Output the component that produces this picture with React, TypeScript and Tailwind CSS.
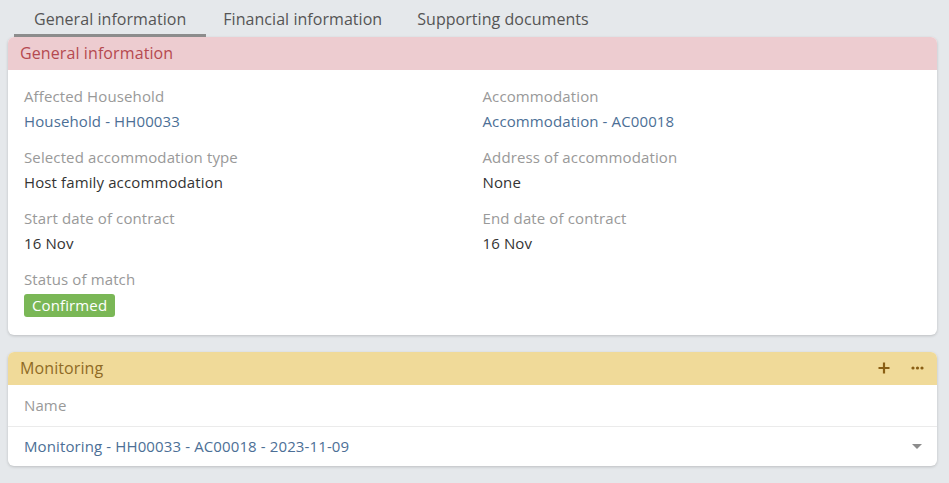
import React from 'react';

const font = { fontFamily: '"Open Sans", "Noto Sans", sans-serif' };

const Field: React.FC<{ label: string; value: React.ReactNode }> = ({ label, value }) => (
  <div className="flex flex-col">
    <div className="text-[15px] leading-[20px] tracking-[0.12px] text-[#999999]">{label}</div>
    <div className="mt-[5px] text-[15px] leading-[20px] tracking-[0.12px]">{value}</div>
  </div>
);

const Link: React.FC<{ children: React.ReactNode }> = ({ children }) => (
  <span className="text-[#4c6f96]">{children}</span>
);

const Plain: React.FC<{ children: React.ReactNode }> = ({ children }) => (
  <span className="text-[#333333]">{children}</span>
);

export default function App() {
  return (
    <div className="w-[949px] h-[483px] bg-[#e5e8eb] overflow-hidden" style={font}>
      {/* Tabs */}
      <div className="flex h-[37px] pl-[14px] text-[16px] tracking-[0.05px] text-[#555555]">
        <div className="flex items-center px-[20px] h-[37px] border-b-[3px] border-[#8c8c8c] pt-[3px]">
          General information
        </div>
        <div className="flex items-center px-[17px] h-[37px]">Financial information</div>
        <div className="flex items-center px-[18px] h-[37px]">Supporting documents</div>
      </div>

      {/* General information card */}
      <div className="mx-[8px] w-[929px] bg-white rounded-[6px] shadow-[0_1px_3px_rgba(0,0,0,0.18)] overflow-hidden">
        <div className="h-[33px] bg-[#edccd0] flex items-center px-[12px] pb-[1px] text-[16px] tracking-[0.1px] text-[#b5494f]">
          General information
        </div>
        <div className="grid grid-cols-2 gap-y-[16px] pl-[16px] pt-[16px] pb-[18px]">
          <Field label="Affected Household" value={<Link>Household - HH00033</Link>} />
          <div className="pl-[2px]">
            <Field label="Accommodation" value={<Link>Accommodation - AC00018</Link>} />
          </div>
          <Field label="Selected accommodation type" value={<Plain>Host family accommodation</Plain>} />
          <div className="pl-[2px]">
            <Field label="Address of accommodation" value={<Plain>None</Plain>} />
          </div>
          <Field label="Start date of contract" value={<Plain>16 Nov</Plain>} />
          <div className="pl-[2px]">
            <Field label="End date of contract" value={<Plain>16 Nov</Plain>} />
          </div>
          <div className="flex flex-col">
            <div className="text-[15px] leading-[20px] tracking-[0.12px] text-[#999999]">Status of match</div>
            <div className="mt-[4px]">
              <span className="inline-flex items-center h-[23px] px-[8px] rounded-[3px] bg-[#7ab756] text-white text-[15px] tracking-[0.12px]">
                Confirmed
              </span>
            </div>
          </div>
        </div>
      </div>

      {/* Monitoring card */}
      <div className="mx-[8px] mt-[17px] w-[929px] bg-white rounded-[6px] shadow-[0_1px_3px_rgba(0,0,0,0.18)] overflow-hidden">
        <div className="h-[33px] bg-[#f0da99] flex items-center justify-between pl-[12px] pr-[12px] pb-[1px] text-[16px] tracking-[0.1px] text-[#8f6a25]">
          <span>Monitoring</span>
          <div className="flex items-center gap-[21px] pr-[1px]">
            <svg width="12" height="12" viewBox="0 0 12 12">
              <path d="M6 0.5v11M0.5 6h11" stroke="#8a5f14" strokeWidth="2.2" />
            </svg>
            <svg width="13" height="4" viewBox="0 0 13 4">
              <circle cx="2" cy="2" r="1.6" fill="#8a5f14" />
              <circle cx="6.5" cy="2" r="1.6" fill="#8a5f14" />
              <circle cx="11" cy="2" r="1.6" fill="#8a5f14" />
            </svg>
          </div>
        </div>
        <div className="h-[42px] flex items-center px-[16px] text-[15px] tracking-[0.12px] text-[#999999] border-b border-[#ebebeb]">
          Name
        </div>
        <div className="h-[39px] flex items-center justify-between pl-[16px] pr-[15px] text-[15px] tracking-[0.12px] text-[#4c6f96]">
          <span>Monitoring - HH00033 - AC00018 - 2023-11-09</span>
          <svg width="10" height="6" viewBox="0 0 10 6">
            <path d="M0 0h10L5 5z" fill="#8c8c8c" />
          </svg>
        </div>
      </div>
    </div>
  );
}
